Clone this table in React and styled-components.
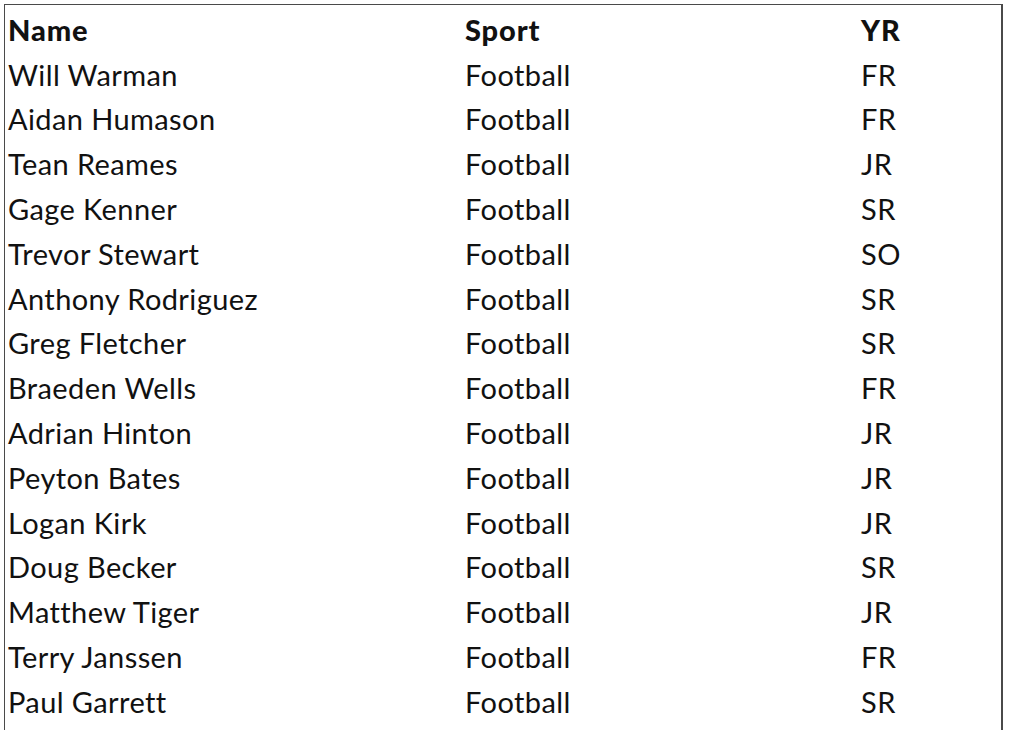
import React from 'react';
import styled, { createGlobalStyle } from 'styled-components';

const rows = [
  ['Will Warman', 'Football', 'FR'],
  ['Aidan Humason', 'Football', 'FR'],
  ['Tean Reames', 'Football', 'JR'],
  ['Gage Kenner', 'Football', 'SR'],
  ['Trevor Stewart', 'Football', 'SO'],
  ['Anthony Rodriguez', 'Football', 'SR'],
  ['Greg Fletcher', 'Football', 'SR'],
  ['Braeden Wells', 'Football', 'FR'],
  ['Adrian Hinton', 'Football', 'JR'],
  ['Peyton Bates', 'Football', 'JR'],
  ['Logan Kirk', 'Football', 'JR'],
  ['Doug Becker', 'Football', 'SR'],
  ['Matthew Tiger', 'Football', 'JR'],
  ['Terry Janssen', 'Football', 'FR'],
  ['Paul Garrett', 'Football', 'SR'],
];

const GlobalStyle = createGlobalStyle`
  html, body {
    margin: 0;
    padding: 0;
    background: #fff;
    overflow: hidden;
  }
  body {
    padding: 4px 0 0 4px;
    font-family: Lato, "Liberation Sans", sans-serif;
    color: #111;
  }
`;

const Table = styled.div`
  width: 999px;
  min-height: 726px;
  border-top: 1.5px solid #4a4a4a;
  border-left: 1.5px solid #4a4a4a;
  border-right: 2px solid #4a4a4a;
  box-sizing: border-box;
  padding: 2px 0 0 3px;
`;

const Row = styled.div`
  display: grid;
  grid-template-columns: 457px 396px 1fr;
  height: 44.8px;
  align-items: center;
  font-size: 29px;
  letter-spacing: ${props => props.head ? '0.9px' : '0.4px'};
  font-weight: ${props => props.head ? 900 : 400};
`;

const Cell = styled.div`
  white-space: nowrap;
`;

export default function App() {
  return (
    <>
      <GlobalStyle />
      <Table>
        <Row head>
          <Cell>Name</Cell>
          <Cell>Sport</Cell>
          <Cell>YR</Cell>
        </Row>
        {rows.map((r, i) => (
          <Row key={i}>
            <Cell>{r[0]}</Cell>
            <Cell>{r[1]}</Cell>
            <Cell>{r[2]}</Cell>
          </Row>
        ))}
      </Table>
    </>
  );
}
